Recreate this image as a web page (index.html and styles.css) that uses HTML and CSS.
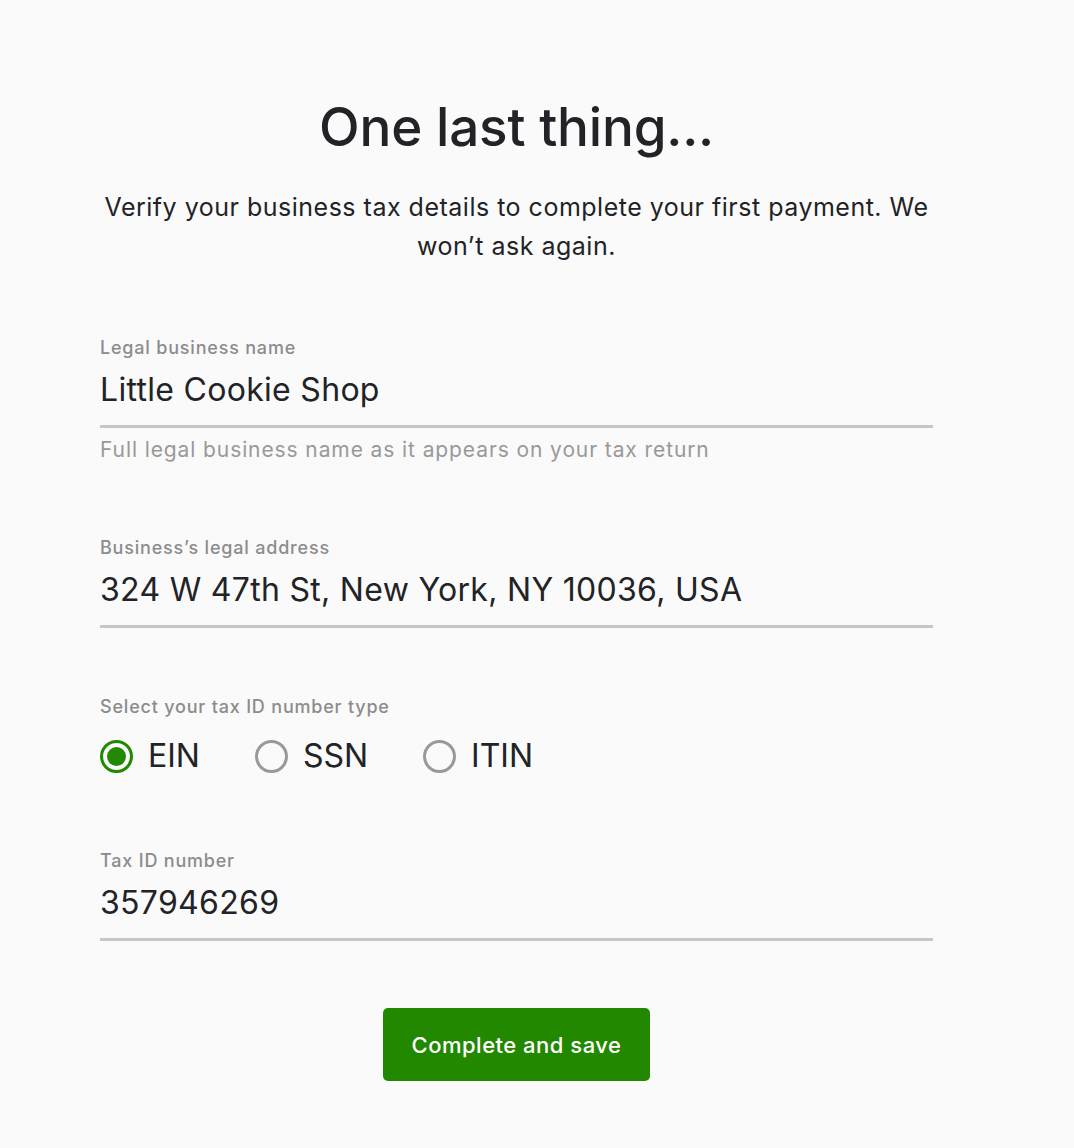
FILE: index.html
```html
<!DOCTYPE html>
<html lang="en">
<head>
<meta charset="utf-8">
<title>One last thing</title>
<link rel="stylesheet" href="styles.css">
</head>
<body>
<main class="page">
  <h1 class="title">One last thing...</h1>
  <p class="subtitle">Verify your business tax details to complete your first payment. We won’t ask again.</p>

  <form class="form">
    <div class="field">
      <label class="label">Legal business name</label>
      <div class="value">Little Cookie Shop</div>
      <div class="help">Full legal business name as it appears on your tax return</div>
    </div>

    <div class="field field-address">
      <label class="label">Business’s legal address</label>
      <div class="value">324 W 47th St, New York, NY 10036, USA</div>
    </div>

    <div class="field field-radio">
      <div class="label">Select your tax ID number type</div>
      <div class="radios">
        <span class="radio checked"><span class="dot"></span>EIN</span>
        <span class="radio"><span class="dot"></span>SSN</span>
        <span class="radio"><span class="dot"></span>ITIN</span>
      </div>
    </div>

    <div class="field field-taxid">
      <label class="label">Tax ID number</label>
      <div class="value">357946269</div>
    </div>

    <div class="actions">
      <button type="button" class="btn">Complete and save</button>
    </div>
  </form>
</main>
</body>
</html>
```

FILE: styles.css
```css
* { box-sizing: border-box; }
html, body { margin: 0; padding: 0; }
body {
  background: #fafafa;
  font-family: Inter, "Noto Sans", Roboto, sans-serif;
  color: #222326;
}
.page {
  width: 833px;
  margin-left: 100px;
  padding-top: 96px;
}
.title {
  margin: 0;
  text-align: center;
  font-size: 53px;
  font-weight: 550;
  line-height: 62px;
  letter-spacing: -0.2px;
}
.subtitle {
  margin: 30px 0 0;
  text-align: center;
  font-size: 25px;
  line-height: 39px;
  font-weight: 400;
  letter-spacing: 0.5px;
  color: #222326;
}
.form { margin-top: 70px; }
.field { display: flex; flex-direction: column; }
.label {
  font-size: 18px;
  line-height: 24px;
  font-weight: 500;
  letter-spacing: 0.8px;
  color: #8c8c8c;
}
.value {
  margin-top: 8px;
  font-size: 32px;
  line-height: 44px;
  padding-bottom: 13px;
  letter-spacing: 0.3px;
  border-bottom: 3px solid #c6c6c6;
  color: #222326;
}
.help {
  margin-top: 8px;
  font-size: 21px;
  line-height: 28px;
  letter-spacing: 0.9px;
  color: #999;
}
.field-address { margin-top: 72px; }
.field-radio { margin-top: 67px; }
.radios {
  display: flex;
  gap: 55px;
  margin-top: 15px;
}
.radio {
  display: inline-flex;
  align-items: center;
  gap: 15px;
  font-size: 32px;
  line-height: 44px;
  color: #222326;
}
.dot {
  width: 33px;
  height: 33px;
  border-radius: 50%;
  border: 3px solid #999;
  display: inline-flex;
  align-items: center;
  justify-content: center;
  flex: none;
}
.radio.checked .dot { border-color: #218a02; }
.radio.checked .dot::after {
  content: "";
  width: 19px;
  height: 19px;
  border-radius: 50%;
  background: #218a02;
}
.field-taxid { margin-top: 71px; }
.actions {
  display: flex;
  justify-content: center;
  margin-top: 67px;
}
.btn {
  width: 267px;
  height: 73px;
  border: 0;
  border-radius: 5px;
  background: #228800;
  color: #fff;
  font-family: inherit;
  font-size: 22px;
  font-weight: 500;
  letter-spacing: 0.5px;
}
```
